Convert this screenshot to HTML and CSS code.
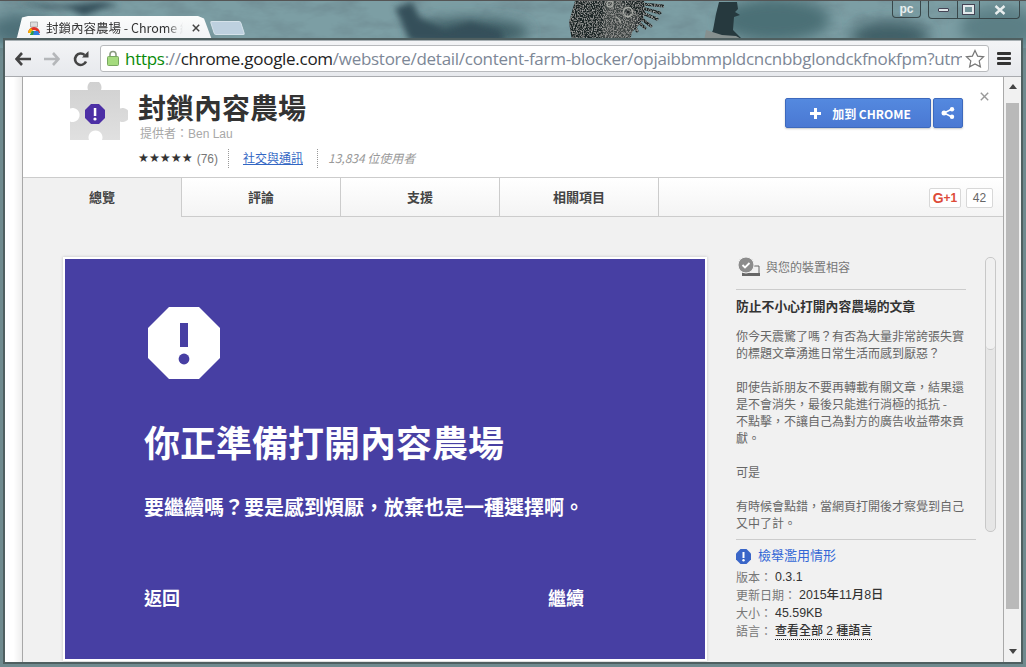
FILE: index.html
```html
<!DOCTYPE html>
<html lang="zh-Hant">
<head>
<meta charset="utf-8">
<title>封鎖內容農場</title>
<link rel="stylesheet" href="styles.css">
</head>
<body>
<div class="window">
  <svg class="art" width="1026" height="667" viewBox="0 0 1026 667">
    <defs>
      <filter id="blur"><feGaussianBlur stdDeviation="7"/></filter>
      <filter id="soft"><feGaussianBlur stdDeviation="3"/></filter>
      <filter id="paint" x="0" y="0" width="100%" height="100%"><feTurbulence type="fractalNoise" baseFrequency="0.03 0.07" numOctaves="5" seed="5"/><feColorMatrix values="0 0 0 0 .17  0 0 0 0 .28  0 0 0 0 .31  2.2 0 0 0 -.85"/></filter>
      <filter id="grain" x="0" y="0" width="100%" height="100%"><feTurbulence type="fractalNoise" baseFrequency="0.9 0.7" numOctaves="2" seed="3"/><feColorMatrix values="0 0 0 0 .42  0 0 0 0 .43  0 0 0 0 .42  2.4 0 0 0 -1.05"/><feComposite in2="SourceAlpha" operator="in"/><feMerge><feMergeNode in="SourceGraphic"/><feMergeNode/></feMerge></filter>
    </defs>
    <rect width="1026" height="667" fill="#6f8a8e"/>
    <rect width="1026" height="48" fill="#7c9ea4"/>
    <rect width="1026" height="48" filter="url(#paint)"/>
    <g filter="url(#blur)" fill="#3f5f66">
      <ellipse cx="470" cy="32" rx="60" ry="14"/>
      <ellipse cx="775" cy="20" rx="55" ry="22" fill="#4c6f76"/>
      <ellipse cx="890" cy="36" rx="40" ry="14"/>
      <ellipse cx="1000" cy="28" rx="40" ry="22" fill="#5b7f85"/>
      <ellipse cx="20" cy="30" rx="30" ry="16" fill="#4d7078"/>
    </g>
    <g filter="url(#soft)" fill="#34505a">
      <path d="M18 2 L60 6 L100 2 L120 4 L98 10 L84 16 L70 9 L44 8 Z"/>
      <path d="M395 8 L412 2 L420 18 L445 30 L470 22 L500 30 L505 41 L410 41 Z"/>
    </g>
    <g filter="url(#grain)">
      <path d="M575 1 L644 1 L645 14 L640 24 L632 32 L630 41 L572 41 L569 22 Z" fill="#1f2526"/>
      <g fill="none" stroke="#1f2526" stroke-width="3" stroke-linecap="round"><path d="M642 4 L664 6 M642 8 L660 13 M640 12 L657 19 M638 16 L651 26 M634 18 L645 28 M632 20 L637 31"/></g>
    </g>
    <path d="M604 1 L622 1 L640 16 L628 41 L602 41 Z" fill="#8d8f8b" opacity=".3"/>
    <g fill="none" stroke="#a9aca6" stroke-width="1.300"><circle cx="628" cy="12" r="4.500"/><circle cx="610" cy="4" r="3"/><path d="M616 17 q5 2 4 6"/></g>
    <circle cx="628" cy="12" r="1.500" fill="#1c2223"/>
    <path d="M719 2 L737 2 L738 9 L735 12 L740 15 L734 17 L733 30 L742 39 L742 41 L708 41 L713 30 L716 14 Z" fill="#26393e"/>
    <path d="M706 30 L722 35 L736 36 L745 41 L704 41 Z" fill="#86908f"/>
  </svg>

  <header class="titlebar">
    <div class="tab">
      <svg class="favicon" width="14" height="14" viewBox="0 0 14 14"><path d="M3.500 1h7v5h-7z" fill="#ddd" stroke="#999" stroke-width=".7"/><path d="M1 12a6 6 0 0 1 12 0h-3a3 3 0 0 0-6 0z" fill="#e0352b"/><path d="M1 12a6 6 0 0 1 3-5l2 3a3 3 0 0 0-2 2z" fill="#f4b400"/><path d="M5 10h6l2 4H3z" fill="#2f7de1"/><path d="M3 14l2-4h2l-1 4z" fill="#2f9e44"/></svg>
      <span class="tab-title">封鎖內容農場 - Chrome 線</span>
      <svg class="tab-close" width="8" height="8" viewBox="0 0 8 8"><path d="M.8.8l6.400 6.400M7.200.8L.8 7.200" stroke="#444" stroke-width="1.500"/></svg>
    </div>
    <div class="newtab"></div>
    <div class="controls">
      <div class="ctl ctl-user">pc</div>
      <div class="ctl-group">
        <div class="ctl ctl-min"><span class="min-bar"></span></div>
        <div class="ctl ctl-max"><span class="max-box"></span></div>
        <div class="ctl ctl-x">
          <svg width="12" height="10" viewBox="0 0 12 10"><path d="M1.500 1l9 8M10.500 1l-9 8" stroke="#e8eeee" stroke-width="2.400"/></svg>
        </div>
      </div>
    </div>
  </header>

  <div class="chrome">
    <nav class="toolbar">
      <svg class="nav-back" width="16" height="14" viewBox="0 0 16 14"><path d="M7 1L1.500 7 7 13M2 7h14" fill="none" stroke="#444" stroke-width="2.600"/></svg>
      <svg class="nav-fwd" width="16" height="14" viewBox="0 0 16 14"><path d="M9 1l5.500 6L9 13M14 7H0" fill="none" stroke="#b5b7ba" stroke-width="2.600"/></svg>
      <svg class="nav-reload" width="16" height="16" viewBox="0 0 16 16"><path d="M13 10.500A5.700 5.700 0 1 1 11.600 4" fill="none" stroke="#444" stroke-width="2.600"/><path d="M9 6.500h6.500V0z" fill="#444"/></svg>
      <div class="omnibox">
        <svg class="lock" width="12" height="16" viewBox="0 0 12 16"><path d="M3 7V4.500a3 3 0 0 1 6 0V7" fill="none" stroke="#8a9a80" stroke-width="1.600"/><rect x=".5" y="6.500" width="11" height="9" rx="1" fill="#a5db7e" stroke="#78a860"/></svg>
        <div class="url"><span class="u-https">https</span><span class="u-rest">://</span><span class="u-host">chrome.google.com</span><span class="u-rest">/webstore/detail/content-farm-blocker/opjaibbmmpldcncnbbglondckfnokfpm?utm</span></div>
        <svg class="star" width="20" height="19" viewBox="0 0 20 19"><path d="M10 1.500l2.600 5.600 6 .7-4.400 4.100 1.200 6L10 15l-5.400 2.900 1.200-6L1.400 7.800l6-.7z" fill="#fff" stroke="#777" stroke-width="1.200"/></svg>
      </div>
      <div class="menu"><span></span><span></span><span></span></div>
    </nav>

    <div class="viewport">
      <div class="strip"></div>
      <div class="dialog">
        <section class="head">
          <svg class="puzzle" width="58" height="58" viewBox="0 0 58 58">
            <defs><linearGradient id="pz" x1="0" y1="0" x2="0" y2="1"><stop offset="0" stop-color="#d0d0d0"/><stop offset="1" stop-color="#e0e0e0"/></linearGradient></defs>
            <path d="M0 8H18a7 7 0 1 1 13 0H50V26.500a7 7 0 1 1 0 13V58H32a7 7 0 1 0-13 0H0V39.500a7 7 0 1 0 0-13Z" fill="url(#pz)"/>
            <path d="M21 22h8l6 6v8l-6 6h-8l-6-6v-8z" fill="#4c2fa5"/>
            <rect x="23.800" y="26" width="2.500" height="8" fill="#fff"/><circle cx="25" cy="37" r="1.600" fill="#fff"/>
          </svg>
          <div class="info">
            <h1 class="name">封鎖內容農場</h1>
            <div class="by">提供者：Ben Lau</div>
            <div class="meta">
              <span class="stars">★★★★★</span><span class="count">(76)</span>
              <span class="cat"><a>社交與通訊</a></span>
              <span class="users">13,834 位使用者</span>
            </div>
          </div>
          <div class="acts">
            <button class="btn btn-add"><svg width="11" height="11" viewBox="0 0 11 11"><path d="M5.500 0v11M0 5.500h11" stroke="#fff" stroke-width="3"/></svg><span>加到 CHROME</span></button>
            <button class="btn btn-share"><svg width="14" height="12" viewBox="0 0 14 12"><path d="M11 2L3 6l8 4" fill="none" stroke="#fff" stroke-width="1.500"/><circle cx="11" cy="2.200" r="2.200" fill="#fff"/><circle cx="3" cy="6" r="2.500" fill="#fff"/><circle cx="11" cy="9.800" r="2.200" fill="#fff"/></svg></button>
          </div>
          <svg class="dismiss" width="9" height="9" viewBox="0 0 9 9"><path d="M.8.8l7.400 7.400M8.200.8L.8 8.200" stroke="#999" stroke-width="1.400"/></svg>
        </section>

        <section class="tabs">
          <div class="t t-on">總覽</div>
          <div class="t">評論</div>
          <div class="t">支援</div>
          <div class="t">相關項目</div>
          <div class="plus">
            <div class="gplus"><b class="g">G</b><b class="p">+1</b></div>
            <div class="gcount">42</div>
          </div>
        </section>

        <section class="main">
          <div class="hero">
            <svg class="warn" width="72" height="72" viewBox="0 0 72 72">
              <path d="M21 0h30l21 21v30L51 72H21L0 51V21z" fill="#fff"/>
              <rect x="32" y="16" width="8" height="24" fill="#473fa3"/><circle cx="36" cy="52" r="5.400" fill="#473fa3"/>
            </svg>
            <h2 class="h-title">你正準備打開內容農場</h2>
            <p class="h-sub">要繼續嗎？要是感到煩厭，放棄也是一種選擇啊。</p>
            <div class="h-acts"><span>返回</span><span>繼續</span></div>
          </div>

          <aside class="side">
            <div class="side-top">
              <div class="desc">
                <div class="compat">
                  <svg width="24" height="20" viewBox="0 0 24 20"><path d="M6 17V9h16v8" fill="none" stroke="#666"/><rect x="5" y="16" width="18" height="3" fill="#666"/><circle cx="9" cy="8" r="8" fill="#8c8c8c" stroke="#f1f1f1"/><path d="M5.500 8l2.500 2.500 4.500-4.500" fill="none" stroke="#fff" stroke-width="1.800"/></svg>
                  <span>與您的裝置相容</span>
                </div>
                <h3 class="d-title">防止不小心打開內容農場的文章</h3>
                <p class="d-text">你今天震驚了嗎？有否為大量非常誇張失實的標題文章湧進日常生活而感到厭惡？<br><br>即使告訴朋友不要再轉載有關文章，結果還是不會消失，最後只能進行消極的抵抗 -<br>不點擊，不讓自己為對方的廣告收益帶來貢獻。<br><br>可是<br><br>有時候會點錯，當網頁打開後才察覺到自己又中了計。</p>
              </div>
              <div class="dscroll"><div class="dthumb"></div></div>
            </div>
            <div class="report">
              <svg width="15" height="15" viewBox="0 0 15 15"><path d="M4.500 0h6L15 4.500v6L10.500 15h-6L0 10.500v-6z" fill="#3a66c8"/><rect x="6.500" y="3" width="2" height="6" fill="#fff"/><circle cx="7.500" cy="11.300" r="1.200" fill="#fff"/></svg>
              <a>檢舉濫用情形</a>
            </div>
            <dl class="facts">
              <div><dt>版本：</dt><dd>0.3.1</dd></div>
              <div><dt>更新日期：</dt><dd>2015年11月8日</dd></div>
              <div><dt>大小：</dt><dd>45.59KB</dd></div>
              <div><dt>語言：</dt><dd class="dots">查看全部 2 種語言</dd></div>
            </dl>
          </aside>
        </section>
      </div>
      <div class="pagebar">
        <span class="arrow-up"></span>
        <div class="pagethumb"></div>
        <span class="arrow-down"></span>
      </div>
    </div>
  </div>
</div>
</body>
</html>
```
FILE: styles.css
```css
* { box-sizing: border-box; }
html, body { margin: 0; height: 100%; overflow: hidden; }
body { font-family: "Noto Sans CJK TC", "Noto Sans", sans-serif; background: #6f8a8e; }
.window { position: relative; width: 1026px; height: 667px; display: flex; flex-direction: column; overflow: hidden; border-top: 1px solid #555; }
.art { position: absolute; left: 0; top: -1px; }

.titlebar { position: relative; height: 39px; display: flex; align-items: flex-end; flex: none; }
.tab { width: 198px; height: 24px; margin-left: 14px; padding: 0 12px 0 13px; display: flex; align-items: center; gap: 5px; background: linear-gradient(#fbfcfc, #f1f3f5); clip-path: polygon(0 100%, 3px 90%, 8px 6%, 14px 0, 184px 0, 190px 10%, 198px 100%); }
.favicon { flex: none; }
.tab-title { flex: 1; font-size: 12.500px; color: #333; white-space: nowrap; overflow: hidden; line-height: 18px; -webkit-mask-image: linear-gradient(90deg, #000 88%, transparent); mask-image: linear-gradient(90deg, #000 88%, transparent); }
.tab-close { flex: none; margin-left: 4px; }
.newtab { width: 31px; height: 14px; margin: 0 0 5px 0; background: #bdd0df; border: 1px solid #d5e2ea; transform: skewX(18deg); border-radius: 2px; }
.controls { margin-left: auto; margin-right: 6px; align-self: flex-start; display: flex; gap: 7px; }
.ctl { height: 17px; display: flex; align-items: center; justify-content: center; color: #e8eeee; }
.ctl-user { width: 29px; font: bold 12px "Liberation Sans", sans-serif; border: 1px solid #39474a; border-top: 0; border-radius: 0 0 4px 4px; }
.ctl-group { display: flex; border: 1px solid #39474a; border-top: 0; border-radius: 0 0 4px 4px; }
.ctl-min { width: 29px; border-right: 1px solid #39474a; }
.ctl-max { width: 22px; border-right: 1px solid #39474a; }
.ctl-x { width: 39px; }
.min-bar { width: 11px; height: 4px; background: #dfe6e8; border: 1px solid #445; border-radius: 1px; }
.max-box { width: 11px; height: 9px; border: 2px solid #e2e8ea; outline: 1px solid #445; }

.chrome { position: relative; flex: 1; min-height: 0; margin: 0 5px 5px 5px; display: flex; flex-direction: column; background: #e9ebef; border-top: 1px solid #a8b0b4; box-shadow: 0 0 0 2px #4f5f60; }
.toolbar { height: 36px; flex: none; display: flex; align-items: center; padding-left: 10px; background: linear-gradient(#f3f4f6, #e7e9ed); border-bottom: 1px solid #a9abaf; }
.nav-back { margin-right: 13px; }
.nav-fwd { margin-right: 13px; }
.nav-reload { margin-right: 11px; }
.omnibox { width: 889px; height: 27px; margin-bottom: 1px; display: flex; align-items: center; padding: 0 3px 0 6px; background: #fff; border: 1px solid #b8babd; border-radius: 3px; }
.lock { flex: none; margin-right: 6px; }
.url { flex: 1; min-width: 0; font: 17px/25px "Open Sans", sans-serif; white-space: nowrap; overflow: hidden; letter-spacing: -.28px; }
.u-https { color: #0a8a0a; }
.u-rest { color: #7d8796; }
.u-host { color: #222; }
.star { flex: none; margin-left: 3px; }
.menu { margin-left: 8px; width: 14px; display: flex; flex-direction: column; gap: 2px; }
.menu span { height: 3px; background: #333; border-radius: 1px; }

.viewport { flex: 1; min-height: 0; display: flex; background: #fff; }
.strip { width: 18px; flex: none; background: linear-gradient(90deg, #fff 50%, #eee); border-right: 1px solid #a8a8a8; }
.dialog { width: 980px; flex: none; display: flex; flex-direction: column; background: #f1f1f1; overflow: hidden; }

.head { height: 101px; flex: none; display: flex; align-items: flex-start; padding: 5px 14px 0 47px; background: #fff; border-bottom: 1px solid #ccc; }
.puzzle { flex: none; }
.info { margin-left: 10px; padding-top: 8px; }
.name { margin: 0; font-size: 28px; line-height: 34px; font-weight: 700; color: #333; }
.by { margin-top: 2px; padding-left: 2px; font: 12px/16px "Liberation Sans", "Noto Sans CJK TC", sans-serif; color: #a8a8a8; }
.meta { margin-top: 7px; display: flex; align-items: center; height: 19px; font-size: 12px; }
.stars { font: 12.200px/19px "DejaVu Sans", sans-serif; color: #333; }
.count { margin-left: 4px; color: #777; font-family: "Liberation Sans", sans-serif; }
.cat { margin-left: 10px; padding-left: 14px; border-left: 1px dotted #999; height: 19px; line-height: 18px; }
.cat a { color: #3367c4; text-decoration: underline; }
.users { margin-left: 14px; padding-left: 10px; border-left: 1px dotted #999; height: 19px; line-height: 18px; font-style: italic; color: #999; font-size: 12px; }
.acts { margin-left: auto; margin-top: 16px; display: flex; gap: 2px; }
.btn { height: 30px; display: flex; align-items: center; justify-content: center; padding: 0; color: #fff; background: linear-gradient(#5489df, #4a78d3); border: 1px solid #3d69bd; border-radius: 2px; box-shadow: 0 1px 2px rgba(0,0,0,.22); }
.btn-add { width: 146px; gap: 11px; padding-left: 5px; font: bold 12px "Noto Sans CJK TC", "Liberation Sans", sans-serif; }
.btn-share { width: 30px; }
.dismiss { flex: none; margin: 10px 0 0 17px; }

.tabs { height: 39px; flex: none; display: flex; background: linear-gradient(#fff, #f4f4f4); border-bottom: 1px solid #ccc; }
.t { width: 159px; height: 38px; padding-bottom: 2px; display: flex; align-items: center; justify-content: center; font-size: 13px; font-weight: 700; color: #444; border-right: 1px solid #ccc; }
.t-on { height: 39px; background: #f1f1f1; }
.plus { margin-left: auto; margin-right: 10px; padding-top: 2px; display: flex; align-items: center; gap: 5px; }
.gplus { width: 32px; height: 20px; display: flex; align-items: center; justify-content: center; background: #fff; border: 1px solid #d8d8d8; border-radius: 2px; color: #dd4b39; font: bold 12px "Liberation Sans", sans-serif; }
.g { font-size: 14px; }
.gcount { width: 27px; height: 20px; display: flex; align-items: center; justify-content: center; background: #fff; border: 1px solid #d8d8d8; border-radius: 2px; color: #666; font: 12px "Liberation Sans", sans-serif; }

.main { flex: 1; min-height: 0; display: flex; align-items: flex-start; padding: 40px 0 0 40px; }
.hero { width: 644px; height: 404px; flex: none; padding: 48px 0 0 79px; background: #473fa3; border: 2px solid #fff; box-shadow: 0 0 3px rgba(0,0,0,.2); color: #fff; }
.warn { display: block; margin-left: 4px; }
.h-title { margin: 38px 0 0; font-size: 36px; line-height: 48px; font-weight: 700; }
.h-sub { margin: 28px 0 0; font-size: 20px; line-height: 28px; font-weight: 700; white-space: nowrap; }
.h-acts { width: 440px; margin-top: 64px; display: flex; justify-content: space-between; font-size: 18px; line-height: 24px; font-weight: 700; }

.side { width: 260px; margin-left: 29px; flex: none; }
.side-top { height: 275px; display: flex; justify-content: space-between; }
.desc { width: 230px; }
.compat { height: 33px; display: flex; align-items: flex-start; gap: 5px; padding: 0 0 0 1px; border-bottom: 1px solid #ccc; font-size: 12px; line-height: 20px; color: #777; }
.compat svg { flex: none; }
.d-title { margin: 6px 0 0; font-size: 12.800px; line-height: 20px; font-weight: 700; color: #333; white-space: nowrap; }
.d-text { margin: 11px 0 0; font-size: 12px; line-height: 17px; color: #666; }
.dscroll { width: 11px; height: 275px; background: #e6e6e6; border: 1px solid #c8c8c8; border-radius: 5px; }
.dthumb { height: 92px; background: #f0f0f0; border-bottom: 1px solid #c8c8c8; border-radius: 5px; }
.report { margin-top: 7px; width: 240px; padding-top: 7px; display: flex; align-items: center; gap: 7px; height: 26px; border-top: 1px solid #ccc; font-size: 13px; }
.report a { color: #3367d6; line-height: 18px; margin-top: -2px; }
.report svg { flex: none; }
.facts { margin: 3px 0 0; font-size: 12px; line-height: 18px; }
.facts div { display: flex; }
.facts dt { color: #777; }
.facts dd { margin: 0 0 0 3px; color: #333; font-size: 12.400px; font-weight: 500; font-family: "Liberation Sans", "Noto Sans CJK TC", sans-serif; }
.facts .dots { border-bottom: 1px dotted #222; height: 18px; font-size: 12px; }

.pagebar { flex: 1; display: flex; flex-direction: column; align-items: center; background: #f1f1f1; border-left: 1px solid #a9a9a9; }
.arrow-up { margin-top: 7px; width: 0; height: 0; border: 4px solid transparent; border-top: 0; border-bottom: 5px solid #444; }
.pagethumb { margin-top: 14px; width: 13px; height: 506px; background: #b9b9b9; }
.arrow-down { margin-top: 40px; width: 0; height: 0; border: 4px solid transparent; border-bottom: 0; border-top: 5px solid #444; }
```
